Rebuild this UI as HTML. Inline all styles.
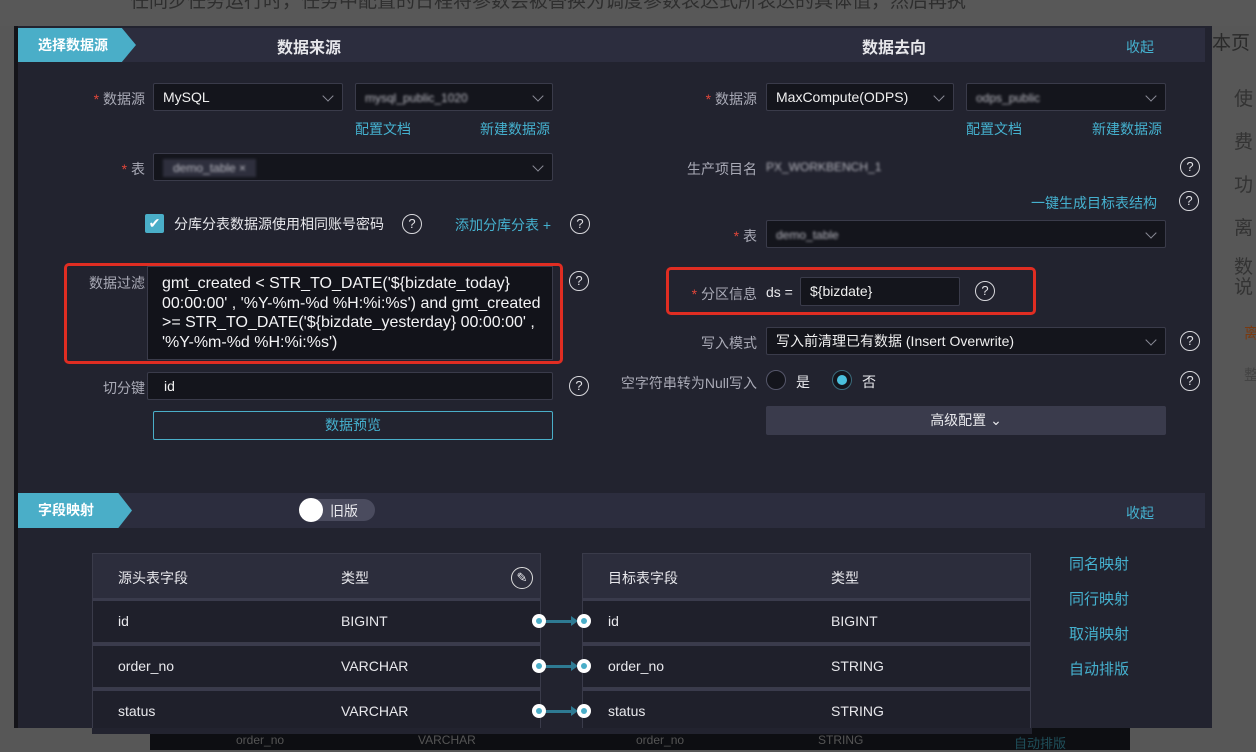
<!DOCTYPE html>
<html><head><meta charset="utf-8"><style>
*{margin:0;padding:0;box-sizing:border-box}
body{width:1256px;height:750px;overflow:hidden;background:#575757;font-family:"Liberation Sans","Noto Sans CJK SC",sans-serif;font-size:14px;color:#e8e8ec;position:relative}
.a{position:absolute}
.m{left:14px;top:26px;width:1198px;height:702px;background:#22232f;border-left:4px solid #141419}
.hb{background:#2c2d3e}
.lbl{color:#a9aab6;font-size:14px;text-align:right}
.req:before{content:"* ";color:#e0463a}
.sel{background:#14151c;border:1px solid #3a3b4a;border-radius:2px;color:#f0f0f0;padding-left:9px;line-height:26px}
.chev{position:absolute;right:10px;top:8px;width:8px;height:8px;border-right:1.5px solid #8a8b97;border-bottom:1.5px solid #8a8b97;transform:rotate(45deg)}
.lk{color:#45b1cf}
.q{width:20px;height:20px;border:1.5px solid #d8d8dc;border-radius:50%;text-align:center;line-height:17px;font-size:13px;color:#e0e0e4}
.blur{color:#b8b8c0;filter:blur(1.3px);font-size:12px}
.red{border:3px solid #e02d22;border-radius:5px}
.tag{background:#4aaec8;color:#fff;font-weight:bold;font-size:14px;line-height:34px;padding-left:20px;clip-path:polygon(0 0,88% 0,100% 50%,88% 100%,0 100%)}
.th{background:#2c2d3c;border:1px solid #3a3b4a}
.tr{border:1px solid #3a3b4a;border-top:3px solid #3a3b4c;background:#1f202b}
.dot{width:14px;height:14px;border-radius:50%;background:#fff;}
.dot:after{content:"";position:absolute;left:4px;top:4px;width:6px;height:6px;border-radius:50%;background:#4aaec8}
.ar{width:0;height:0;border-left:7px solid #2e7a93;border-top:5px solid transparent;border-bottom:5px solid transparent}
</style></head><body>
<div class="a" style="left:0;top:0;width:1256px;height:26px;background:#585858"></div>
<div class="a" style="left:130px;top:-14px;color:#2e2e2e;font-size:19px">任同步任务运行时，任务中配置的日程将参数会被替换为调度参数表达式所表达的具体值，然后再执</div>
<div class="a" style="left:1212px;top:28px;color:#2a2a2a;font-size:19px">本页</div>
<div class="a" style="left:1234px;top:84px;color:#333;font-size:19px">使</div>
<div class="a" style="left:1234px;top:127px;color:#333;font-size:19px">费</div>
<div class="a" style="left:1234px;top:170px;color:#333;font-size:19px">功</div>
<div class="a" style="left:1234px;top:213px;color:#333;font-size:19px">离</div>
<div class="a" style="left:1234px;top:258px;color:#333;font-size:19px;line-height:20px">数<br>说</div>
<div class="a" style="left:1244px;top:322px;color:#7a3a10;font-size:15px">离</div>
<div class="a" style="left:1244px;top:364px;color:#444;font-size:15px">整</div>
<div class="a" style="left:150px;top:728px;width:980px;height:22px;background:#0d0e12"></div>
<div class="a" style="left:236px;top:733px;color:#555;font-size:12px">order_no</div>
<div class="a" style="left:418px;top:733px;color:#555;font-size:12px">VARCHAR</div>
<div class="a" style="left:636px;top:733px;color:#555;font-size:12px">order_no</div>
<div class="a" style="left:818px;top:733px;color:#555;font-size:12px">STRING</div>
<div class="a" style="left:1014px;top:733px;color:#1f4f5a;font-size:13px">自动排版</div>

<div class="a m"></div>
<div class="a hb" style="left:18px;top:28px;width:1187px;height:34px"></div>
<div class="a tag" style="left:18px;top:28px;width:118px">选择数据源</div>
<div class="a" style="left:277px;top:34px;font-size:16px;font-weight:bold;color:#e6e6ea">数据来源</div>
<div class="a" style="left:862px;top:34px;font-size:16px;font-weight:bold;color:#e6e6ea">数据去向</div>
<div class="a lk" style="left:1126px;top:37px;font-size:14px">收起</div>

<!-- left -->
<div class="a lbl req" style="left:60px;top:89px;width:85px">数据源</div>
<div class="a sel" style="left:153px;top:83px;width:190px;height:28px">MySQL<i class="chev"></i></div>
<div class="a sel" style="left:355px;top:83px;width:198px;height:28px"><span class="blur">mysql_public_1020</span><i class="chev"></i></div>
<div class="a lk" style="left:355px;top:119px">配置文档</div>
<div class="a lk" style="left:480px;top:119px">新建数据源</div>
<div class="a lbl req" style="left:60px;top:159px;width:85px">表</div>
<div class="a sel" style="left:153px;top:153px;width:400px;height:28px"><span style="background:#2e2f3d;padding:2px 10px" class="blur">demo_table ×</span><i class="chev"></i></div>
<div class="a" style="left:145px;top:214px;width:19px;height:19px;background:#4aaec8;border-radius:2px;color:#fff;font-size:14px;text-align:center;line-height:19px">✔</div>
<div class="a" style="left:174px;top:214px">分库分表数据源使用相同账号密码</div>
<div class="a q" style="left:402px;top:214px">?</div>
<div class="a lk" style="left:455px;top:215px">添加分库分表 +</div>
<div class="a q" style="left:570px;top:214px">?</div>

<div class="a red" style="left:64px;top:263px;width:499px;height:101px"></div>
<div class="a lbl" style="left:60px;top:273px;width:85px">数据过滤</div>
<div class="a" style="left:147px;top:266px;width:406px;height:94px;background:#12131a;border:1px solid #3a3b4a;padding:7px 2px 0 14px;font-size:16px;line-height:19.5px;color:#f4f4f6">gmt_created &lt; STR_TO_DATE('${bizdate_today} 00:00:00' , '%Y-%m-%d %H:%i:%s') and gmt_created &gt;= STR_TO_DATE('${bizdate_yesterday} 00:00:00' , '%Y-%m-%d %H:%i:%s')</div>
<div class="a q" style="left:569px;top:271px">?</div>
<div class="a lbl" style="left:60px;top:378px;width:85px">切分键</div>
<div class="a sel" style="left:147px;top:372px;width:406px;height:28px;padding-left:16px">id</div>
<div class="a q" style="left:569px;top:376px">?</div>
<div class="a" style="left:153px;top:411px;width:400px;height:29px;border:1px solid #4aaec8;border-radius:2px;text-align:center;line-height:27px;color:#45b1cf">数据预览</div>

<!-- right -->
<div class="a lbl req" style="left:660px;top:89px;width:97px">数据源</div>
<div class="a sel" style="left:766px;top:83px;width:188px;height:28px">MaxCompute(ODPS)<i class="chev"></i></div>
<div class="a sel" style="left:966px;top:83px;width:200px;height:28px"><span class="blur">odps_public</span><i class="chev"></i></div>
<div class="a lk" style="left:966px;top:119px">配置文档</div>
<div class="a lk" style="left:1092px;top:119px">新建数据源</div>
<div class="a lbl" style="left:640px;top:159px;width:117px">生产项目名</div>
<div class="a blur" style="left:766px;top:160px">PX_WORKBENCH_1</div>
<div class="a q" style="left:1180px;top:157px">?</div>
<div class="a lk" style="left:1031px;top:193px">一键生成目标表结构</div>
<div class="a q" style="left:1179px;top:191px">?</div>
<div class="a lbl req" style="left:660px;top:226px;width:97px">表</div>
<div class="a sel" style="left:766px;top:220px;width:400px;height:28px"><span class="blur">demo_table</span><i class="chev"></i></div>

<div class="a red" style="left:666px;top:267px;width:370px;height:48px"></div>
<div class="a lbl req" style="left:660px;top:284px;width:97px">分区信息</div>
<div class="a" style="left:766px;top:284px">ds =</div>
<div class="a sel" style="left:800px;top:277px;width:160px;height:29px;line-height:27px">${bizdate}</div>
<div class="a q" style="left:975px;top:281px">?</div>
<div class="a lbl" style="left:640px;top:333px;width:117px">写入模式</div>
<div class="a sel" style="left:766px;top:327px;width:400px;height:28px">写入前清理已有数据 (Insert Overwrite)<i class="chev"></i></div>
<div class="a q" style="left:1180px;top:331px">?</div>
<div class="a lbl" style="left:600px;top:373px;width:157px">空字符串转为Null写入</div>
<div class="a" style="left:766px;top:370px;width:20px;height:20px;border-radius:50%;border:1px solid #55566a;background:#14151c"></div>
<div class="a" style="left:796px;top:372px">是</div>
<div class="a" style="left:832px;top:370px;width:20px;height:20px;border-radius:50%;border:1px solid #3a6a7a;background:#14151c"><div style="margin:4px;width:10px;height:10px;border-radius:50%;background:#4ac0dc"></div></div>
<div class="a" style="left:862px;top:372px">否</div>
<div class="a q" style="left:1180px;top:371px">?</div>
<div class="a" style="left:766px;top:406px;width:400px;height:29px;background:#3a3b4c;border-radius:2px;text-align:center;line-height:29px">高级配置 ⌄</div>

<!-- mapping -->
<div class="a hb" style="left:18px;top:493px;width:1187px;height:35px"></div>
<div class="a tag" style="left:18px;top:493px;width:114px;line-height:35px">字段映射</div>
<div class="a" style="left:300px;top:499px;width:75px;height:22px;border-radius:11px;background:#4a4b5e"></div>
<div class="a" style="left:299px;top:498px;width:24px;height:24px;border-radius:50%;background:#fff"></div>
<div class="a" style="left:330px;top:501px;font-size:14px">旧版</div>
<div class="a lk" style="left:1126px;top:503px">收起</div>

<div class="a th" style="left:92px;top:553px;width:449px;height:46px"></div>
<div class="a" style="left:118px;top:568px">源头表字段</div>
<div class="a" style="left:341px;top:568px">类型</div>
<div class="a" style="left:511px;top:567px;width:22px;height:22px;border:1.5px solid #ddd;border-radius:50%;text-align:center;font-size:13px;line-height:19px">✎</div>
<div class="a th" style="left:582px;top:553px;width:449px;height:46px"></div>
<div class="a" style="left:608px;top:568px">目标表字段</div>
<div class="a" style="left:831px;top:568px">类型</div>

<div class="a tr" style="left:92px;top:598px;width:449px;height:45px"></div>
<div class="a tr" style="left:92px;top:643px;width:449px;height:45px"></div>
<div class="a tr" style="left:92px;top:688px;width:449px;height:45px;border-bottom:none"></div>
<div class="a tr" style="left:582px;top:598px;width:449px;height:45px"></div>
<div class="a tr" style="left:582px;top:643px;width:449px;height:45px"></div>
<div class="a tr" style="left:582px;top:688px;width:449px;height:45px;border-bottom:none"></div>
<div class="a" style="left:92px;top:728px;width:940px;height:6px;background:#22232f"></div>

<div class="a" style="left:118px;top:613px">id</div><div class="a" style="left:341px;top:613px">BIGINT</div>
<div class="a" style="left:118px;top:658px">order_no</div><div class="a" style="left:341px;top:658px">VARCHAR</div>
<div class="a" style="left:118px;top:703px">status</div><div class="a" style="left:341px;top:703px">VARCHAR</div>
<div class="a" style="left:608px;top:613px">id</div><div class="a" style="left:831px;top:613px">BIGINT</div>
<div class="a" style="left:608px;top:658px">order_no</div><div class="a" style="left:831px;top:658px">STRING</div>
<div class="a" style="left:608px;top:703px">status</div><div class="a" style="left:831px;top:703px">STRING</div>

<div class="a" style="left:540px;top:620px;width:32px;height:3px;background:#2e7a93"></div><div class="a ar" style="left:571px;top:616px"></div>
<div class="a dot" style="left:532px;top:614px"></div><div class="a dot" style="left:577px;top:614px"></div>
<div class="a" style="left:540px;top:665px;width:32px;height:3px;background:#2e7a93"></div><div class="a ar" style="left:571px;top:661px"></div>
<div class="a dot" style="left:532px;top:659px"></div><div class="a dot" style="left:577px;top:659px"></div>
<div class="a" style="left:540px;top:710px;width:32px;height:3px;background:#2e7a93"></div><div class="a ar" style="left:571px;top:706px"></div>
<div class="a dot" style="left:532px;top:704px"></div><div class="a dot" style="left:577px;top:704px"></div>

<div class="a lk" style="left:1069px;top:553px;font-size:15px">同名映射</div>
<div class="a lk" style="left:1069px;top:588px;font-size:15px">同行映射</div>
<div class="a lk" style="left:1069px;top:623px;font-size:15px">取消映射</div>
<div class="a lk" style="left:1069px;top:658px;font-size:15px">自动排版</div>
</body></html>
